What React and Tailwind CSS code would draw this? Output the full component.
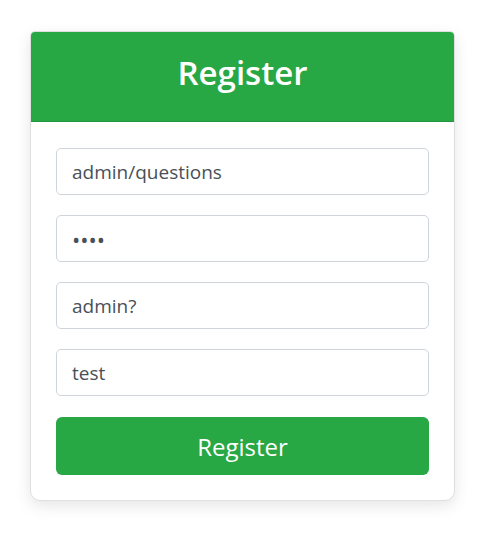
export default function App() {
  const field =
    "block h-[47px] w-full rounded-[5px] border border-[#ced4da] bg-white px-[15px] leading-[30px] text-[#495057] outline-none";
  return (
    <main className="min-h-screen bg-white pt-[31px] pr-[47px] pl-[30px] font-['Open_Sans','Noto_Sans',sans-serif]">
      <section className="overflow-hidden rounded-[10px] rounded-t-[5px] border border-[#dfdfdf] bg-white shadow-[0_5px_15px_rgba(0,0,0,0.1)]">
        <header className="border-b border-[#24963e] bg-[#28a745] px-6 pt-[18px] pb-[26px] text-center text-white">
          <h1 className="text-[33px] leading-[45px] font-semibold">Register</h1>
        </header>
        <form className="flex flex-col gap-[21px] px-[25px] pt-[26px] pb-[25px]" onSubmit={(e) => e.preventDefault()}>
          <div className="flex flex-col gap-5">
            <input className={`${field} text-[19px]`} type="text" aria-label="Username" defaultValue="admin/questions" />
            <input className={`${field} text-[22px]`} type="password" aria-label="Password" defaultValue="test" />
            <input className={`${field} text-[19px]`} type="text" aria-label="Question" defaultValue="admin?" />
            <input className={`${field} text-[19px]`} type="text" aria-label="Answer" defaultValue="test" />
          </div>
          <button type="submit" className="rounded-[6px] bg-[#28a745] pt-[11px] pb-[9px] text-[24px] leading-[38px] text-white">
            Register
          </button>
        </form>
      </section>
    </main>
  );
}
